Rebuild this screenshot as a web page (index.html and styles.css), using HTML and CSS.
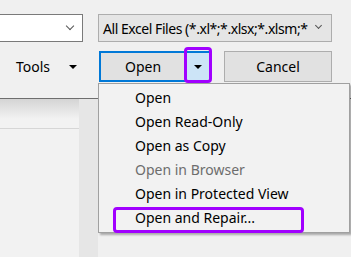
FILE: index.html
```html
<!DOCTYPE html>
<html lang="en">
<head>
    <meta charset="UTF-8">
    <title>Open dialog</title>
    <link rel="stylesheet" href="styles.css">
</head>
<body>
    <div class="dialog">
        <div class="top">
            <div class="row row-combos">
                <div class="combo combo-name">
                    <span class="chevron"></span>
                </div>
                <div class="combo combo-type">
                    <span class="combo-text">All Excel Files (*.xl*;*.xlsx;*.xlsm;*</span>
                    <span class="chevron"></span>
                </div>
            </div>
            <div class="row row-buttons">
                <div class="tools">
                    <span>Tools</span>
                    <span class="arrow"></span>
                </div>
                <div class="split">
                    <div class="split-main">Open</div>
                    <div class="split-drop"><span class="arrow"></span></div>
                    <div class="mark mark-drop"></div>
                </div>
                <div class="btn">Cancel</div>
            </div>
        </div>

        <div class="lower">
            <div class="pane">
                <div class="pane-line"></div>
            </div>
            <div class="pane-col"></div>
            <div class="pane-rest"></div>
        </div>

        <!-- dropdown of the Open button -->
        <div class="menu">
            <div class="menu-item">Open</div>
            <div class="menu-item">Open Read-Only</div>
            <div class="menu-item">Open as Copy</div>
            <div class="menu-item disabled">Open in Browser</div>
            <div class="menu-item">Open in Protected View</div>
            <div class="menu-item">Open and Repair...</div>
            <div class="mark mark-repair"></div>
        </div>
    </div>
</body>
</html>
```

FILE: styles.css
```css
body {
    margin: 0;
    font-family: "Noto Sans", "Open Sans", sans-serif;
    font-size: 14px;
    color: #000;
    background: #f0f0f0;
}

.dialog {
    position: relative;
    width: 351px;
    height: 257px;
    overflow: hidden;
    background: #f0f0f0;
}

.top {
    height: 98px;
    box-sizing: border-box;
    padding-top: 14px;
}

.row {
    display: flex;
    align-items: center;
}

.combo {
    position: relative;
    box-sizing: border-box;
    height: 28px;
    border: 1px solid #7a7a7a;
    background: #fff;
}

.combo-name {
    width: 84px;
    margin-left: -1px;
}

.combo-type {
    width: 234px;
    margin-left: 15px;
    background: #e5e5e5;
    border-color: #adadad;
    display: flex;
    align-items: center;
    padding-left: 4px;
}

.combo-text {
    white-space: nowrap;
    letter-spacing: -0.45px;
}

.chevron {
    position: absolute;
    right: 8px;
    top: 8px;
    width: 5px;
    height: 5px;
    border-right: 1px solid #555;
    border-bottom: 1px solid #555;
    transform: rotate(45deg);
}

.combo-name .chevron {
    right: 9px;
}

.combo-type .chevron {
    right: 10px;
    width: 4px;
    height: 4px;
}

.row-buttons {
    margin-top: 9px;
}

.tools {
    width: 99px;
    display: flex;
    align-items: center;
    padding-left: 16px;
    box-sizing: border-box;
    gap: 19px;
}

.arrow {
    width: 0;
    height: 0;
    border-left: 4px solid transparent;
    border-right: 4px solid transparent;
    border-top: 4px solid #000;
}

.split {
    position: relative;
    display: flex;
    height: 31px;
}

.split-main {
    width: 86px;
    box-sizing: border-box;
    border: 2px solid #0078d7;
    border-right: none;
    background: #e1e1e1;
    display: flex;
    align-items: center;
    justify-content: center;
}

.split-drop {
    width: 26px;
    box-sizing: border-box;
    border: 2px solid #0078d7;
    border-left: 1px solid #0078d7;
    background: #cce4f7;
    display: flex;
    align-items: center;
    justify-content: center;
}

.btn {
    margin-left: 13px;
    width: 108px;
    height: 31px;
    box-sizing: border-box;
    border: 1px solid #adadad;
    background: #e1e1e1;
    display: flex;
    align-items: center;
    justify-content: center;
}

.mark {
    position: absolute;
    border: 3px solid #a100ff;
    border-radius: 4px;
    box-sizing: border-box;
}

.mark-drop {
    left: 85px;
    top: -4px;
    width: 28px;
    height: 36px;
}

.lower {
    display: flex;
    height: 159px;
    border-top: 1px solid #6e6e6e;
}

.pane {
    width: 79px;
    background: linear-gradient(#d4d4d4, #f2f2f2 20px);
}

.pane-line {
    margin-top: 29px;
    height: 1px;
    background: #d6d6d6;
}

.pane-col {
    width: 19px;
    background: #e6e6e6;
}

.pane-rest {
    flex: 1;
    background: #f0f0f0;
}

.menu {
    position: absolute;
    left: 98px;
    top: 83px;
    width: 252px;
    box-sizing: border-box;
    padding: 2px 0 2px;
    border: 1px solid #a0a0a0;
    background: #f2f2f2;
    box-shadow: 2px 2px 2px rgba(0, 0, 0, 0.3);
}

.menu-item {
    height: 24px;
    line-height: 24px;
    padding-left: 36px;
    white-space: nowrap;
}

.menu-item.disabled {
    color: #6d6d6d;
}

.mark-repair {
    left: 14px;
    top: 123px;
    width: 191px;
    height: 26px;
}
```
